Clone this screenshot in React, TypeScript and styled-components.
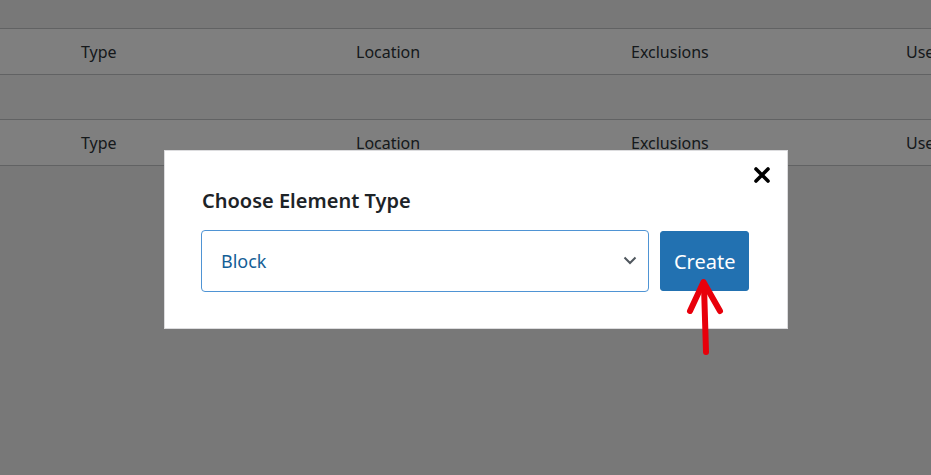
import React from 'react';
import styled, {createGlobalStyle} from 'styled-components';

const columns = ['Type', 'Location', 'Exclusions', 'Users']

const GlobalStyle = createGlobalStyle`
  html, body {
    margin: 0;
    padding: 0;
    background: #f0f0f1;
    font-family: "Noto Sans", "Open Sans", sans-serif;
  }
`

const Page = styled.div`
  position: relative;
  width: 931px;
  height: 475px;
  overflow: hidden;
  padding-top: 28px;
  box-sizing: border-box;
`

const Table = styled.div`
  display: flex;
  flex-direction: column;
  border-top: 1px solid #c3c4c7;
`

const Row = styled.div<{ striped?: boolean }>`
  display: flex;
  height: ${props => props.striped ? '44px' : '45px'};
  align-items: center;
  padding-left: 71px;
  background: ${props => props.striped ? '#f6f7f7' : '#fff'};
  border-bottom: 1px solid #c3c4c7;
  white-space: nowrap;
`

const Cell = styled.div`
  flex: 0 0 275px;
  box-sizing: border-box;
  padding-left: 10px;
  font-size: 16px;
  color: #2c3338;
`

const Overlay = styled.div`
  position: absolute;
  inset: 0;
  background: rgba(0, 0, 0, 0.5);
`

const Modal = styled.div`
  position: absolute;
  left: 164px;
  top: 150px;
  width: 624px;
  height: 179px;
  box-sizing: border-box;
  background: #fff;
  border: 1px solid #dcdcde;
  padding: 36px 38px 0 36px;
`

const CloseButton = styled.button`
  position: absolute;
  top: 13px;
  right: 14px;
  width: 22px;
  height: 22px;
  padding: 0;
  border: 0;
  background: none;
  display: flex;
  align-items: center;
  justify-content: center;
`

const Title = styled.h2`
  margin: 0 0 15px 1px;
  font-size: 20px;
  font-weight: 600;
  line-height: 28px;
  color: #1d2327;
`

const Controls = styled.div`
  display: flex;
  align-items: center;
  gap: 11px;
`

const SelectBox = styled.div`
  position: relative;
  width: 450px;
  height: 62px;
  box-sizing: border-box;
  border: 1px solid #4f94d4;
  border-radius: 4px;
  display: flex;
  align-items: center;
  padding-left: 19px;
  font-size: 18px;
  color: #135e96;
`

const Chevron = styled.svg`
  position: absolute;
  right: 11px;
  top: 24px;
`

const CreateButton = styled.button`
  width: 89px;
  height: 60px;
  border: 1px solid #2271b1;
  border-radius: 3px;
  background: #2271b1;
  color: #fff;
  font-family: "Noto Sans", "Open Sans", sans-serif;
  font-size: 20px;
  padding: 0;
`

const Arrow = styled.svg`
  position: absolute;
  left: 682px;
  top: 274px;
`

export default function App() {
  return (
    <>
      <GlobalStyle/>
      <Page>
        <Table>
          <Row>{columns.map(c => <Cell key={c}>{c}</Cell>)}</Row>
          <Row striped/>
          <Row>{columns.map(c => <Cell key={c}>{c}</Cell>)}</Row>
        </Table>
        <Overlay/>
        <Modal>
          <CloseButton aria-label="Close">
            <svg width="18" height="18" viewBox="0 0 18 18">
              <path d="M3 3 L15 15 M15 3 L3 15" stroke="#000" strokeWidth="3.6" strokeLinecap="round"/>
            </svg>
          </CloseButton>
          <Title>Choose Element Type</Title>
          <Controls>
            <SelectBox>
              Block
              <Chevron width="14" height="10" viewBox="0 0 14 10">
                <path d="M1.5 2.5 L7 8 L12.5 2.5" fill="none" stroke="#50575e" strokeWidth="2"/>
              </Chevron>
            </SelectBox>
            <CreateButton>Create</CreateButton>
          </Controls>
        </Modal>
        <Arrow width="48" height="86" viewBox="0 0 48 86">
          <g stroke="#e8000b" strokeWidth="6" strokeLinecap="round" strokeLinejoin="round" fill="none">
            <path d="M24 78 L22 12"/>
            <path d="M8 37 L21.5 8 L38 37"/>
          </g>
        </Arrow>
      </Page>
    </>
  );
}
